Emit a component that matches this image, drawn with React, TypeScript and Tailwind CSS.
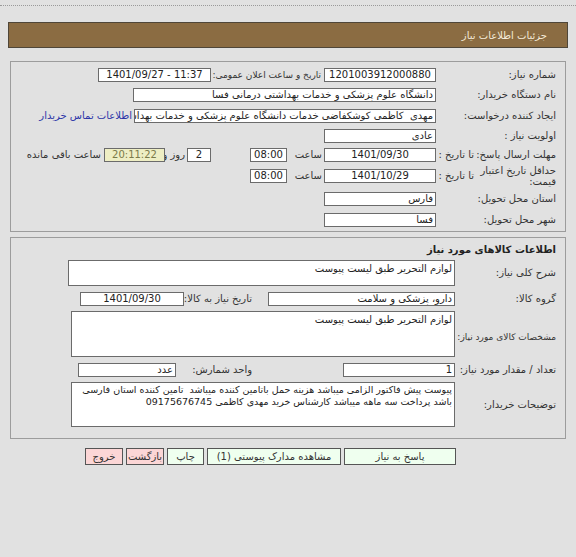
import React from "react";

type BoxProps = {
  w: string;
  center?: boolean;
  className?: string;
  children?: React.ReactNode;
};

const Box: React.FC<BoxProps> = ({ w, center, className = "", children }) => {
  return (
    <div
      className={`${w} h-[14px] shrink-0 overflow-hidden whitespace-nowrap border border-[#6b6b6b] px-[2px] text-[10px] leading-[12px] ${
        center ? "text-center" : "text-right"
      } ${className || "bg-white text-[#222]"}`}
    >
      {children}
    </div>
  );
};

const Label: React.FC<{ w: string; size?: string; className?: string; children?: React.ReactNode }> = ({
  w,
  size = "text-[10px] leading-[12px]",
  className = "",
  children,
}) => {
  return <div className={`${w} ${size} shrink-0 text-right text-[#333] ${className}`}>{children}</div>;
};

const Area: React.FC<{ w: string; h: string; size?: string; className?: string; children?: React.ReactNode }> = ({
  w,
  h,
  size = "text-[10px] leading-[13px]",
  className = "",
  children,
}) => {
  return (
    <div
      className={`${w} ${h} ${size} shrink-0 overflow-hidden border border-[#6b6b6b] bg-white px-[2px] pt-[1px] text-right text-[#222] ${className}`}
    >
      {children}
    </div>
  );
};

const Button: React.FC<{ w: string; pink?: boolean; children: React.ReactNode }> = ({ w, pink, children }) => {
  return (
    <div
      className={`${w} flex h-[17px] shrink-0 items-center justify-center whitespace-nowrap border border-[#555] text-[10px] text-[#333] ${
        pink ? "bg-[#fcd6d6]" : "bg-[#efffef]"
      }`}
    >
      {children}
    </div>
  );
};

export default function App() {
  return (
    <div
      dir="rtl"
      className="min-h-[557px] w-[576px] bg-[#e1e1e1] font-['DejaVu_Sans','Noto_Sans',sans-serif] text-[#333]"
    >
      <div className="h-[6px] border-b border-dotted border-[#9a9a9a]" />

      {/* header */}
      <div className="mx-[8px] mt-[16px] flex h-[26px] items-center border border-[#4f4638] bg-[#8b6c42] pr-[20px] text-[10px] text-[#f3ead8]">
        جزئیات اطلاعات نیاز
      </div>

      {/* general info */}
      <div className="mx-[10px] mt-[13px] h-[171px] border border-[#9c9c9c] pr-[9px] pt-[3px]">
        <div className="flex h-[20px] items-center">
          <Label w="w-[120px]">شماره نیاز:</Label>
          <Box w="w-[112px]" center>
            1201003912000880
          </Box>
          <Label w="w-[113px]" size="text-[9px] leading-[12px]" className="whitespace-nowrap pr-[3px]">
            تاریخ و ساعت اعلان عمومی:
          </Label>
          <Box w="w-[113px]" center>
            <span dir="ltr">1401/09/27 - 11:37</span>
          </Box>
        </div>
        <div className="flex h-[20px] items-center">
          <Label w="w-[120px]">نام دستگاه خریدار:</Label>
          <Box w="w-[303px]">دانشگاه علوم پزشکی و خدمات بهداشتی درمانی فسا</Box>
        </div>
        <div className="flex h-[21px] items-center">
          <Label w="w-[120px]">ایجاد کننده درخواست:</Label>
          <Box w="w-[302px]">مهدی&nbsp; کاظمی کوشکفاضی خدمات دانشگاه علوم پزشکی و خدمات بهداشتی درمانی فسا</Box>
          <div className="whitespace-nowrap pr-[2px] text-[10px] text-[#2b35a8]">اطلاعات تماس خریدار</div>
        </div>
        <div className="flex h-[20px] items-center">
          <Label w="w-[120px]">اولویت نیاز :</Label>
          <Box w="w-[112px]">عادی</Box>
        </div>
        <div className="flex h-[18px] items-center">
          <Label w="w-[82px]" className="whitespace-nowrap">
            مهلت ارسال پاسخ:
          </Label>
          <Label w="w-[38px]" className="whitespace-nowrap">
            تا تاریخ :
          </Label>
          <Box w="w-[112px]" center>
            1401/09/30
          </Box>
          <Label w="w-[37px]" className="pr-[2px]">
            ساعت
          </Label>
          <Box w="w-[37px]" center>
            08:00
          </Box>
          <div className="w-[39px] shrink-0" />
          <Box w="w-[24px]" center>
            2
          </Box>
          <Label w="w-[22px]" className="whitespace-nowrap pr-[2px]">
            روز و
          </Label>
          <Box w="w-[61px]" center className="bg-[#eeeec4] text-[#7a7a4a]">
            20:11:22
          </Box>
          <Label w="w-[72px]" className="whitespace-nowrap pr-[3px]">
            ساعت باقی مانده
          </Label>
        </div>
        <div className="flex h-[24px] items-center">
          <Label w="w-[82px]" size="text-[10px] leading-[11px]">
            حداقل تاریخ اعتبار قیمت:
          </Label>
          <Label w="w-[38px]" className="whitespace-nowrap">
            تا تاریخ :
          </Label>
          <Box w="w-[112px]" center>
            1401/10/29
          </Box>
          <Label w="w-[37px]" className="pr-[2px]">
            ساعت
          </Label>
          <Box w="w-[37px]" center>
            08:00
          </Box>
        </div>
        <div className="flex h-[21px] items-center">
          <Label w="w-[120px]">استان محل تحویل:</Label>
          <Box w="w-[112px]">فارس</Box>
        </div>
        <div className="flex h-[21px] items-center">
          <Label w="w-[120px]">شهر محل تحویل:</Label>
          <Box w="w-[112px]">فسا</Box>
        </div>
      </div>

      {/* goods */}
      <div className="mx-[10px] mt-[5px] h-[202px] border border-[#9c9c9c] pr-[9px]">
        <div className="flex h-[22px] items-center text-[10px] font-bold text-[#222]">اطلاعات کالاهای مورد نیاز</div>
        <div className="flex items-center">
          <Label w="w-[101px]">شرح کلی نیاز:</Label>
          <Area w="w-[387px]" h="h-[26px]">
            لوازم التحریر طبق لیست پیوست
          </Area>
        </div>
        <div className="flex h-[25px] items-center">
          <Label w="w-[101px]">گروه کالا:</Label>
          <Box w="w-[187px]">دارو، پزشکی و سلامت</Box>
          <div className="w-[16px] shrink-0" />
          <Label w="w-[68px]" className="whitespace-nowrap">
            تاریخ نیاز به کالا:
          </Label>
          <Box w="w-[104px]" center>
            1401/09/30
          </Box>
        </div>
        <div className="flex items-center">
          <Label w="w-[101px]" size="text-[9px] leading-[12px]" className="mt-[6px] whitespace-nowrap">
            مشخصات کالای مورد نیاز:
          </Label>
          <Area w="w-[384px]" h="h-[46px]">
            لوازم التحریر طبق لیست پیوست
          </Area>
        </div>
        <div className="flex h-[25px] items-center">
          <Label w="w-[101px]" className="whitespace-nowrap">
            تعداد / مقدار مورد نیاز:
          </Label>
          <Box w="w-[112px]">1</Box>
          <div className="w-[91px] shrink-0" />
          <Label w="w-[76px]">واحد شمارش:</Label>
          <Box w="w-[98px]">عدد</Box>
        </div>
        <div className="flex items-center">
          <Label w="w-[101px]">توضیحات خریدار:</Label>
          <Area w="w-[384px]" h="h-[45px]" size="text-[9.5px] leading-[12px]" className="whitespace-nowrap">
            پیوست پیش فاکتور الزامی میباشد هزینه حمل باتامین کننده میباشد&nbsp; تامین کننده استان فارسی
            <br />
            باشد پرداخت سه ماهه میباشد کارشناس خرید مهدی کاظمی 09175676745
          </Area>
        </div>
      </div>

      {/* actions */}
      <div className="mt-[9px] flex gap-[3px] pr-[120px]">
        <Button w="w-[112px]">پاسخ به نیاز</Button>
        <Button w="w-[134px]">مشاهده مدارک پیوستی (1)</Button>
        <Button w="w-[37px]">چاپ</Button>
        <Button w="w-[38px]" pink>
          بازگشت
        </Button>
        <Button w="w-[38px]" pink>
          خروج
        </Button>
      </div>
    </div>
  );
}
